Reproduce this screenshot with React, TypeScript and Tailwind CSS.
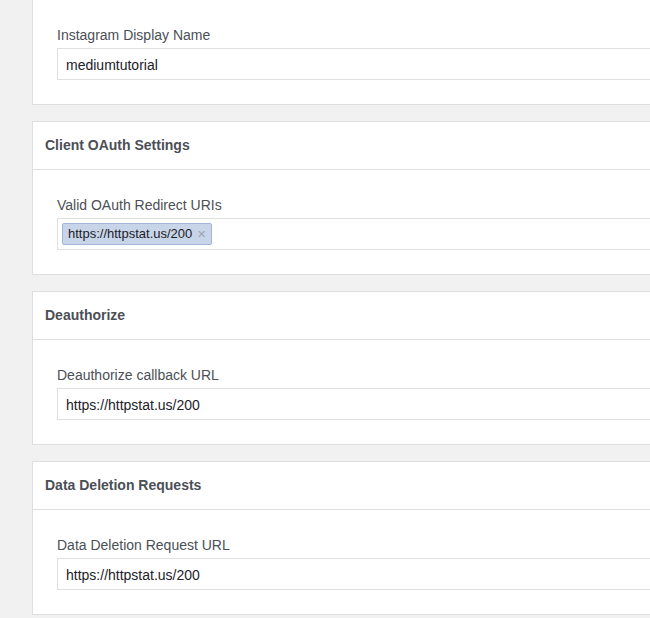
import React from "react";

const Field: React.FC<{ label: string; children: React.ReactNode }> = ({ label, children }) => (
  <div className="pt-[24px] pb-[24px] pl-[24px] pr-[24px]">
    <div className="h-[20px] leading-[22px] text-[14px] text-[#4b4f56]">{label}</div>
    <div className="mt-[4px] h-[32px] border border-[#dddfe2] bg-white flex items-center">{children}</div>
  </div>
);

const Card: React.FC<{ title?: string; first?: boolean; children: React.ReactNode }> = ({ title, first, children }) => (
  <div className={"w-[680px] bg-white border-[#dddfe2] border-l border-b " + (first ? "" : "border-t mt-[16px]")}>
    {title && (
      <div className="h-[48px] flex items-center pl-[12px] border-b border-[#dddfe2] text-[14px] font-bold text-[#4b4f56]">
        {title}
      </div>
    )}
    {children}
  </div>
);

export default function App() {
  return (
    <div className="w-[650px] h-[618px] overflow-hidden bg-[#f1f1f1] pl-[32px] font-['Liberation_Sans',Arial,sans-serif]">
      <Card first>
        <Field label="Instagram Display Name">
          <span className="pl-[8px] pt-[2px] text-[14px] text-[#1d2129]">mediumtutorial</span>
        </Field>
      </Card>

      <Card title="Client OAuth Settings">
        <Field label="Valid OAuth Redirect URIs">
          <span className="ml-[4px] h-[22px] flex items-center gap-[5px] px-[5px] rounded-[2px] bg-[#c8d5e8] border border-[#9fb6d9] text-[13px] text-[#1d2129]">
            https://httpstat.us/200
            <span className="text-[11px] text-[#9aa4b3] leading-none">✕</span>
          </span>
        </Field>
      </Card>

      <Card title="Deauthorize">
        <Field label="Deauthorize callback URL">
          <span className="pl-[8px] pt-[2px] text-[14px] text-[#1d2129]">https://httpstat.us/200</span>
        </Field>
      </Card>

      <Card title="Data Deletion Requests">
        <Field label="Data Deletion Request URL">
          <span className="pl-[8px] pt-[2px] text-[14px] text-[#1d2129]">https://httpstat.us/200</span>
        </Field>
      </Card>
    </div>
  );
}
